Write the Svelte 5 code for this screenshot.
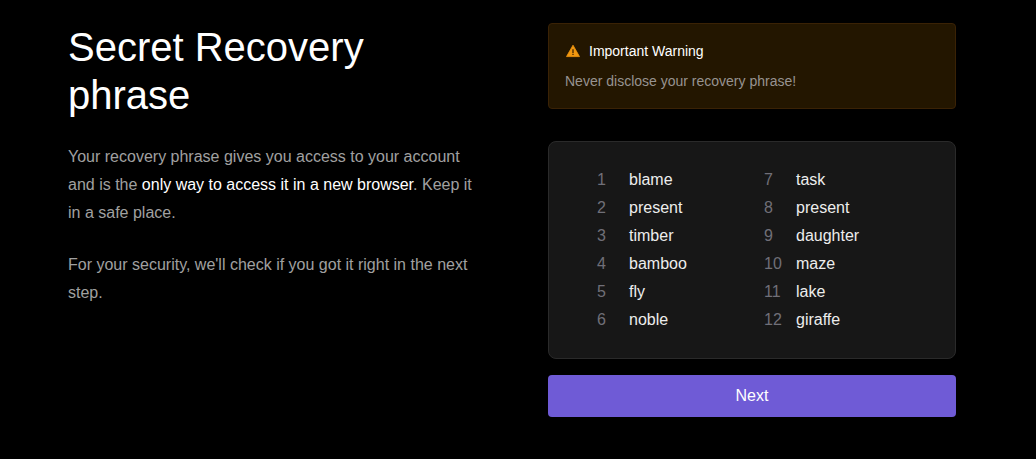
<script>
  const words = ['blame', 'present', 'timber', 'bamboo', 'fly', 'noble', 'task', 'present', 'daughter', 'maze', 'lake', 'giraffe'];
  const columns = [words.slice(0, 6), words.slice(6)];
</script>

<main>
  <section class="intro">
    <h1>Secret Recovery phrase</h1>
    <p>Your recovery phrase gives you access to your account and is the <strong>only way to access it in a new browser</strong>. Keep it in a safe place.</p>
    <p>For your security, we'll check if you got it right in the next step.</p>
  </section>

  <section class="panel">
    <div class="warning" role="note">
      <h2>
        <svg viewBox="0 0 16 16" width="16" height="16" aria-hidden="true">
          <path d="M8 2.200 14.500 13.600H1.500z" fill="#f1970f" stroke="#f1970f" stroke-width=".8" stroke-linejoin="round" />
          <path d="M7.300 6.300h1.400v3.600H7.300zM7.300 10.700h1.400v1.400H7.300z" fill="#4a2c02" />
        </svg>
        Important Warning
      </h2>
      <p>Never disclose your recovery phrase!</p>
    </div>

    <div class="phrase">
      {#each columns as column, c}
        <ol start={c * 6 + 1}>
          {#each column as word, i}
            <li><span class="number">{c * 6 + i + 1}</span><span>{word}</span></li>
          {/each}
        </ol>
      {/each}
    </div>

    <button type="button">Next</button>
  </section>
</main>

<style>
  :global(body) {
    margin: 0;
    background: #000;
  }

  main {
    display: grid;
    grid-template-columns: 1fr 1fr;
    gap: 72px;
    padding: 23px 80px 42px 68px;
    color: #fff;
    font-family: "Liberation Sans", Arial, sans-serif;
    font-size: 16px;
    line-height: 28px;
  }

  h1 {
    margin: 0 0 24px;
    font-size: 40px;
    font-weight: 400;
    line-height: 48px;
  }

  .intro p {
    margin: 0 0 24px;
    color: #a0a0a0;
  }

  strong {
    color: #fff;
    font-weight: 400;
  }

  .warning {
    margin-bottom: 32px;
    padding: 16px;
    border: 1px solid #3a2205;
    border-radius: 4px;
    background: #231600;
    font-size: 14px;
    line-height: 22px;
  }

  h2 {
    display: flex;
    align-items: center;
    gap: 8px;
    margin: 0 0 8px;
    font-size: 14px;
    font-weight: 400;
  }

  .warning p {
    margin: 0;
    color: #979390;
  }

  .phrase {
    display: grid;
    grid-template-columns: 1fr 1fr;
    gap: 24px;
    margin-bottom: 16px;
    padding: 24px 48px;
    border: 1px solid #2a2a2a;
    border-radius: 8px;
    background: #171717;
  }

  ol {
    margin: 0;
    padding: 0;
    list-style: none;
  }

  li {
    display: grid;
    grid-template-columns: 32px 1fr;
    color: #ededed;
  }

  .number {
    color: #706f78;
  }

  button {
    width: 100%;
    padding: 7px 16px;
    border: 0;
    border-radius: 4px;
    background: #6f5bd6;
    color: #fff;
    font: inherit;
    cursor: pointer;
  }
</style>
